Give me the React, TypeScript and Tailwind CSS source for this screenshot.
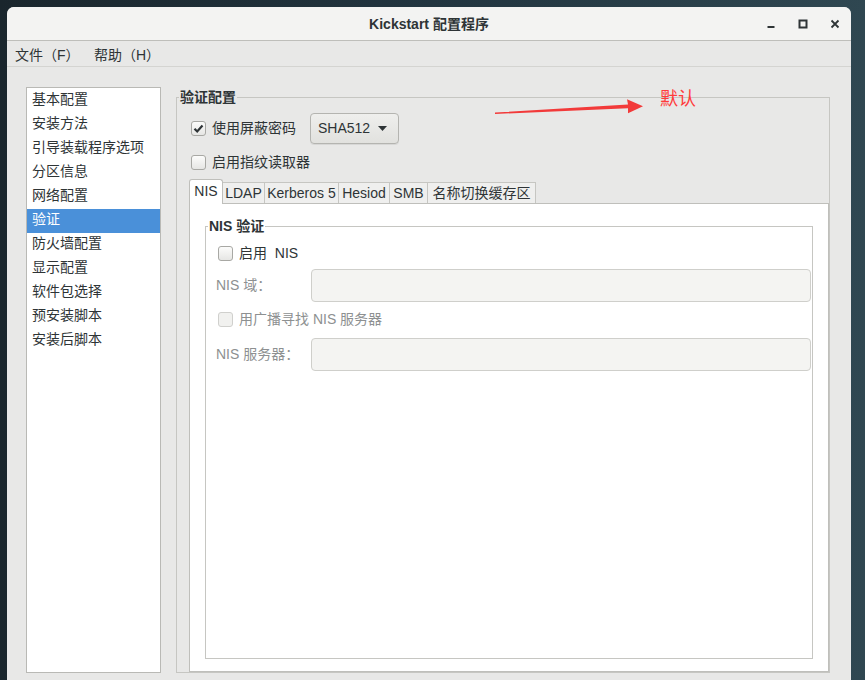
import type { ReactNode } from 'react';

const sections = [
  '基本配置',
  '安装方法',
  '引导装载程序选项',
  '分区信息',
  '网络配置',
  '验证',
  '防火墙配置',
  '显示配置',
  '软件包选择',
  '预安装脚本',
  '安装后脚本',
];

const tabs = [
  { label: 'NIS', width: 'w-[34px]' },
  { label: 'LDAP', width: 'w-[42px]' },
  { label: 'Kerberos 5', width: 'w-[74px]' },
  { label: 'Hesiod', width: 'w-[51px]' },
  { label: 'SMB', width: 'w-[38px]' },
  { label: '名称切换缓存区', width: 'w-[108px]' },
];

function CheckBox({ checked, disabled }: { checked?: boolean; disabled?: boolean }) {
  if (disabled)
    return (
      <span className="h-[15px] w-[15px] shrink-0 rounded-[3px] border border-[#d0d0cd] bg-[#f1f1ef]" />
    );

  return (
    <span className="flex h-[15px] w-[15px] shrink-0 items-center justify-center rounded-[3px] border border-[#a8a8a4] bg-linear-to-b from-[#fcfcfb] to-[#e6e6e4]">
      {checked && (
        <svg width="11" height="11" viewBox="0 0 11 11">
          <path d="M1.5 5.8 L4.2 8.5 L9.5 2.5" fill="none" stroke="#2e3436" strokeWidth="2.2" />
        </svg>
      )}
    </span>
  );
}

function Frame({ title, className, children }: { title: string; className?: string; children: ReactNode }) {
  return (
    <fieldset className={`flex flex-col border border-[#c6c6c2] ${className ?? ''}`}>
      <legend className="ml-[2px] px-[1px] font-bold leading-[20px]">{title}</legend>
      {children}
    </fieldset>
  );
}

function WindowButton({ children }: { children: ReactNode }) {
  return <div className="flex h-[34px] w-[32px] items-center justify-center">{children}</div>;
}

export default function App() {
  return (
    <div className="relative h-[680px] w-[865px] overflow-hidden bg-linear-to-r from-[#1a262d] via-[#223540] to-[#2f4751] pl-[7px] pt-[7px] font-['Liberation_Sans','Noto_Sans_CJK_SC',sans-serif] text-[14px] text-[#2e3436]">
      <div className="flex h-[700px] w-[844px] flex-col overflow-hidden rounded-t-[7px] bg-[#e8e8e7]">
        <header className="grid h-[34px] shrink-0 grid-cols-[1fr_auto_1fr] items-center border-b border-[#bebeba] bg-[#f3f3f2]">
          <div />
          <h1 className="font-bold">Kickstart 配置程序</h1>
          <div className="flex justify-end">
            <WindowButton>
              <svg width="10" height="10" viewBox="0 0 10 10">
                <rect x="1.5" y="7" width="7" height="2" fill="#2e3436" />
              </svg>
            </WindowButton>
            <WindowButton>
              <svg width="10" height="10" viewBox="0 0 10 10">
                <rect x="1.5" y="1.5" width="7" height="7" fill="none" stroke="#2e3436" strokeWidth="2" />
              </svg>
            </WindowButton>
            <WindowButton>
              <svg width="10" height="10" viewBox="0 0 10 10">
                <path d="M1.5 1.5 L8.5 8.5 M8.5 1.5 L1.5 8.5" stroke="#2e3436" strokeWidth="1.8" />
              </svg>
            </WindowButton>
          </div>
        </header>

        <nav className="flex h-[26px] shrink-0 items-center border-b border-[#d4d4d1] pl-[8px] pt-[4px]">
          <span className="w-[79px]">文件（F）</span>
          <span>帮助（H）</span>
        </nav>

        <main className="flex pl-[19px] pt-[20px]">
          <ul className="h-[586px] w-[135px] shrink-0 border border-[#b9b9b5] bg-white py-[1px]">
            {sections.map((name) => (
              <li
                key={name}
                className={`h-[24px] pl-[5px] leading-[21px] ${name === '验证' ? 'bg-[#4a90d9] text-white' : ''}`}
              >
                {name}
              </li>
            ))}
          </ul>

          <Frame title="验证配置" className="ml-[15px] h-[586px] w-[654px]">
            <div className="mt-[6px] flex h-[31px] items-center pl-[14px]">
              <CheckBox checked />
              <span className="ml-[6px]">使用屏蔽密码</span>
              <button className="ml-[14px] flex h-[31px] w-[89px] items-center justify-between rounded-[4px] border border-[#b4b4b0] bg-linear-to-b from-[#efefed] to-[#e1e1de] pl-[7px] pr-[11px] shadow-[0_1px_0_rgba(0,0,0,0.07)]">
                <span>SHA512</span>
                <svg width="9" height="5" viewBox="0 0 9 5">
                  <path d="M0 0 H9 L4.5 5 Z" fill="#2e3436" />
                </svg>
              </button>
            </div>
            <div className="mt-[8px] flex h-[20px] items-center pl-[14px]">
              <CheckBox />
              <span className="ml-[6px]">启用指纹读取器</span>
            </div>

            <div className="mt-[7px] flex flex-1 flex-col pl-[12px]">
              <div className="flex h-[24px] items-end">
                {tabs.map((tab, i) =>
                  i === 0 ? (
                    <div
                      key={tab.label}
                      className={`relative z-10 -mb-px flex h-[25px] items-center justify-center rounded-t-[3px] border border-b-0 border-[#bfbfbb] bg-white pb-[2px] ${tab.width}`}
                    >
                      {tab.label}
                    </div>
                  ) : (
                    <div
                      key={tab.label}
                      className={`flex h-[21px] items-center justify-center border-t border-r border-[#c6c6c2] bg-[#efefee] ${tab.width}`}
                    >
                      {tab.label}
                    </div>
                  ),
                )}
              </div>

              <div className="flex flex-1 flex-col border border-[#bfbfbb] bg-white px-[15px] pb-[12px] pt-[12px]">
                <Frame title="NIS 验证" className="flex-1">
                  <div className="mt-[7px] flex h-[20px] items-center pl-[12px]">
                    <CheckBox />
                    <span className="ml-[6px]">启用&nbsp;&nbsp;NIS</span>
                  </div>
                  <div className="mt-[6px] flex h-[33px] items-center pl-[10px] pr-[1px] text-[#8d9091]">
                    <span className="w-[95px] shrink-0">NIS 域：</span>
                    <div className="h-[33px] flex-1 rounded-[4px] border border-[#cfcfcb] bg-[#f4f4f2]" />
                  </div>
                  <div className="mt-[7px] flex h-[20px] items-center pl-[12px] text-[#8d9091]">
                    <CheckBox disabled />
                    <span className="ml-[6px]">用广播寻找 NIS 服务器</span>
                  </div>
                  <div className="mt-[9px] flex h-[33px] items-center pl-[10px] pr-[1px] text-[#8d9091]">
                    <span className="w-[95px] shrink-0">NIS 服务器：</span>
                    <div className="h-[33px] flex-1 rounded-[4px] border border-[#cfcfcb] bg-[#f4f4f2]" />
                  </div>
                </Frame>
              </div>
            </div>
          </Frame>
        </main>
      </div>

      {/* red annotation drawn over the screenshot */}
      <svg className="absolute left-0 top-0" width="865" height="680" viewBox="0 0 865 680">
        <path d="M495 112.6 L628 104.6 L627 99.3 L643 106.2 L628 113.3 L628 108.2 L495 114 Z" fill="#f23a3a" />
      </svg>
      <span className="absolute left-[660px] top-[87px] text-[18px] leading-[24px] text-[#ff3b3b]">默认</span>
    </div>
  );
}
